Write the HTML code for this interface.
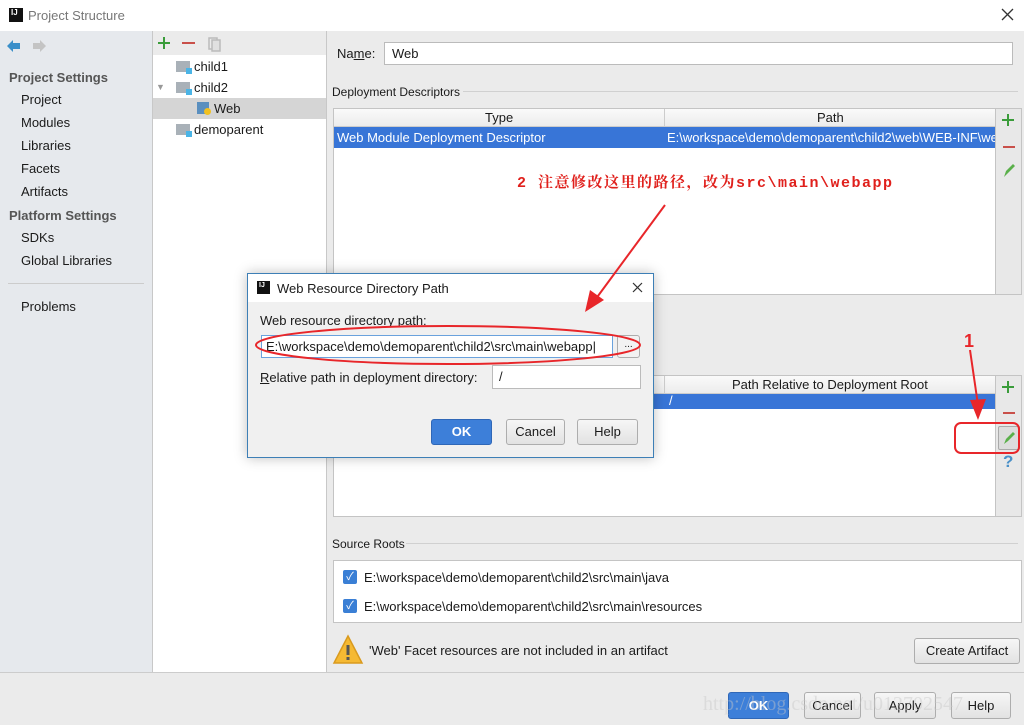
<!DOCTYPE html>
<html><head><meta charset="utf-8"><style>
*{box-sizing:border-box;margin:0;padding:0}
body{width:1024px;height:725px;position:relative;overflow:hidden;background:#ebebeb;font-family:"Liberation Sans","Noto Sans CJK SC",sans-serif;font-size:13px;color:#1a1a1a}
.a{position:absolute;white-space:nowrap}
.btn{position:absolute;border:1px solid #adadad;border-radius:3px;background:linear-gradient(#f6f6f6,#e2e2e2);text-align:center;font-size:13px}
.ok{background:#3d7fd9;border-color:#2f67b7;color:#fff;font-weight:bold}
.sel{background:#3875d7;color:#fff}
</style></head><body>
<div class="a" style="left:0;top:0;width:1024px;height:31px;background:#fff"></div>
<div class="a" style="left:9px;top:8px;width:14px;height:14px;background:#111;color:#fff;font-size:8px;font-weight:bold;line-height:10px;padding-left:2px">IJ</div>
<div class="a" style="left:28px;top:8px;color:#777;font-size:13px">Project Structure</div>
<svg class="a" style="left:1001px;top:8px" width="13" height="13"><path d="M1 1L12 12M12 1L1 12" stroke="#333" stroke-width="1.3"/></svg>
<div class="a" style="left:0;top:31px;width:152px;height:641px;background:#e6e9ed"></div>
<svg class="a" style="left:5px;top:38px" width="45" height="16"><path d="M2 8L8 2V5H15V11H8V14Z" fill="#3a8fc9"/><path d="M41 8L35 2V5H28V11H35V14Z" fill="#c4c4c4"/></svg>
<div class="a" style="left:9px;top:70px;font-weight:bold;color:#555">Project Settings</div>
<div class="a" style="left:21px;top:92px">Project</div>
<div class="a" style="left:21px;top:115px">Modules</div>
<div class="a" style="left:21px;top:138px">Libraries</div>
<div class="a" style="left:21px;top:161px">Facets</div>
<div class="a" style="left:21px;top:184px">Artifacts</div>
<div class="a" style="left:9px;top:208px;font-weight:bold;color:#555">Platform Settings</div>
<div class="a" style="left:21px;top:230px">SDKs</div>
<div class="a" style="left:21px;top:253px">Global Libraries</div>
<div class="a" style="left:8px;top:283px;width:136px;height:1px;background:#ccc"></div>
<div class="a" style="left:21px;top:299px">Problems</div>
<div class="a" style="left:152px;top:31px;width:175px;height:641px;background:#fff;border-left:1px solid #c8c8c8;border-right:1px solid #c8c8c8"></div>
<div class="a" style="left:153px;top:31px;width:173px;height:24px;background:#ebebeb"></div>
<svg class="a" style="left:157px;top:36px" width="70" height="16"><path d="M7 1V13M1 7H13" stroke="#3a9c3a" stroke-width="2"/><path d="M25 7H38" stroke="#c9504a" stroke-width="2"/><rect x="52" y="2" width="8" height="11" fill="none" stroke="#bbb" stroke-width="1.5"/><rect x="55" y="4" width="8" height="11" fill="#e0e0e0" stroke="#bbb" stroke-width="1.5"/></svg>
<div class="a" style="left:153px;top:98px;width:173px;height:21px;background:#d5d5d5"></div>
<div class="a" style="left:176px;top:61px;width:14px;height:11px;background:#a9b1b8"></div><div class="a" style="left:186px;top:68px;width:6px;height:6px;background:#4ab4e6"></div>
<div class="a" style="left:194px;top:59px">child1</div>
<div class="a" style="left:156px;top:82px;font-size:9px;color:#999">▼</div>
<div class="a" style="left:176px;top:82px;width:14px;height:11px;background:#a9b1b8"></div><div class="a" style="left:186px;top:89px;width:6px;height:6px;background:#4ab4e6"></div>
<div class="a" style="left:194px;top:80px">child2</div>
<div class="a" style="left:197px;top:102px;width:12px;height:12px;background:#5a8fbf"></div><div class="a" style="left:204px;top:108px;width:7px;height:7px;border-radius:50%;background:#f0c020"></div>
<div class="a" style="left:214px;top:101px">Web</div>
<div class="a" style="left:176px;top:124px;width:14px;height:11px;background:#a9b1b8"></div><div class="a" style="left:186px;top:131px;width:6px;height:6px;background:#4ab4e6"></div>
<div class="a" style="left:194px;top:122px">demoparent</div>
<div class="a" style="left:337px;top:46px">Na<u>m</u>e:</div>
<div class="a" style="left:384px;top:42px;width:629px;height:23px;background:#fff;border:1px solid #bbb;padding:3px 7px">Web</div>
<div class="a" style="left:332px;top:85px;font-size:12px">Deployment Descriptors</div>
<div class="a" style="left:463px;top:91px;width:555px;height:1px;background:#d0d0d0"></div>
<div class="a" style="left:333px;top:108px;width:663px;height:187px;background:#fff;border:1px solid #c4c4c4"></div>
<div class="a" style="left:334px;top:109px;width:661px;height:18px;background:linear-gradient(#fafafa,#ececec);border-bottom:1px solid #ccc"></div>
<div class="a" style="left:485px;top:110px">Type</div>
<div class="a" style="left:817px;top:110px">Path</div>
<div class="a" style="left:664px;top:109px;width:1px;height:39px;background:#ccc"></div>
<div class="a sel" style="left:334px;top:127px;width:661px;height:21px"></div>
<div class="a" style="left:337px;top:130px;color:#fff">Web Module Deployment Descriptor</div>
<div class="a" style="left:667px;top:130px;color:#fff;width:328px;overflow:hidden">E:\workspace\demo\demoparent\child2\web\WEB-INF\web.xml</div>
<div class="a" style="left:996px;top:108px;width:26px;height:187px;background:#e8e8e8;border:1px solid #c4c4c4;border-left:none"></div>
<svg class="a" style="left:1001px;top:113px" width="16" height="70"><path d="M7 1V13M1 7H13" stroke="#3a9c3a" stroke-width="2"/><path d="M2 34H14" stroke="#c9504a" stroke-width="2"/><path d="M3 64L5 58L12 51L14 53L7 60Z" fill="#5ab04a"/></svg>
<div class="a" style="left:517px;top:171px;color:#e0201c;font-family:'Liberation Mono','Noto Serif CJK SC',monospace;font-size:15px;font-weight:bold;letter-spacing:1.5px">2 注意修改这里的路径，改为src\main\webapp</div>
<div class="a" style="left:333px;top:375px;width:663px;height:142px;background:#fff;border:1px solid #c4c4c4"></div>
<div class="a" style="left:334px;top:376px;width:661px;height:18px;background:linear-gradient(#fafafa,#ececec);border-bottom:1px solid #ccc"></div>
<div class="a" style="left:664px;top:376px;width:1px;height:33px;background:#ccc"></div>
<div class="a" style="left:732px;top:377px">Path Relative to Deployment Root</div>
<div class="a sel" style="left:334px;top:394px;width:661px;height:15px"></div>
<div class="a" style="left:669px;top:393px;color:#fff">/</div>
<div class="a" style="left:996px;top:375px;width:26px;height:142px;background:#e8e8e8;border:1px solid #c4c4c4;border-left:none"></div>
<svg class="a" style="left:1001px;top:380px" width="16" height="40"><path d="M7 1V13M1 7H13" stroke="#3a9c3a" stroke-width="2"/><path d="M2 33H14" stroke="#c9504a" stroke-width="2"/></svg>
<div class="a" style="left:998px;top:426px;width:22px;height:24px;border:1px solid #aaa;border-radius:2px;background:#ddd"></div>
<svg class="a" style="left:1002px;top:430px" width="16" height="16"><path d="M2 14L4 9L11 2L13 4L6 11Z" fill="#5ab04a"/></svg>
<div class="a" style="left:1003px;top:452px;font-size:17px;color:#4a90c8;font-weight:bold">?</div>
<div class="a" style="left:332px;top:537px;font-size:12px">Source Roots</div>
<div class="a" style="left:406px;top:543px;width:612px;height:1px;background:#d0d0d0"></div>
<div class="a" style="left:333px;top:560px;width:689px;height:63px;background:#fff;border:1px solid #c4c4c4"></div>
<div class="a" style="left:343px;top:570px;width:14px;height:14px;background:#3a7fd5;border-radius:2px;color:#fff;font-size:11px;line-height:14px;text-align:center">✓</div>
<div class="a" style="left:364px;top:570px">E:\workspace\demo\demoparent\child2\src\main\java</div>
<div class="a" style="left:343px;top:599px;width:14px;height:14px;background:#3a7fd5;border-radius:2px;color:#fff;font-size:11px;line-height:14px;text-align:center">✓</div>
<div class="a" style="left:364px;top:599px">E:\workspace\demo\demoparent\child2\src\main\resources</div>
<svg class="a" style="left:332px;top:634px" width="32" height="32"><path d="M16 2 L30 29 L2 29 Z" fill="#f5b933" stroke="#d99a1e" stroke-width="1.5"/><rect x="14.5" y="11" width="3" height="10" fill="#555"/><rect x="14.5" y="23" width="3" height="3" fill="#555"/></svg>
<div class="a" style="left:369px;top:643px">'Web' Facet resources are not included in an artifact</div>
<div class="btn" style="left:914px;top:638px;width:106px;height:26px;line-height:24px">Create Artifact</div>
<div class="a" style="left:0;top:672px;width:1024px;height:1px;background:#ccc"></div>
<div class="btn ok" style="left:728px;top:692px;width:61px;height:27px;line-height:25px">OK</div>
<div class="btn" style="left:804px;top:692px;width:57px;height:27px;line-height:25px">Cancel</div>
<div class="btn" style="left:874px;top:692px;width:62px;height:27px;line-height:25px">Apply</div>
<div class="btn" style="left:951px;top:692px;width:60px;height:27px;line-height:25px">Help</div>
<div class="a" style="left:703px;top:693px;font-family:'Liberation Serif',serif;font-size:20px;color:rgba(200,200,200,0.45)">http://blog.csdn.net/u012702547</div>
<div class="a" style="left:247px;top:273px;width:407px;height:185px;background:#f0f0f0;border:1px solid #3d7fb6;box-shadow:0 0 12px rgba(0,0,0,0.25)"></div>
<div class="a" style="left:248px;top:274px;width:405px;height:28px;background:#fff"></div>
<div class="a" style="left:257px;top:281px;width:13px;height:13px;background:#111;color:#fff;font-size:7px;font-weight:bold;padding-left:2px;line-height:9px">IJ</div>
<div class="a" style="left:277px;top:281px">Web Resource Directory Path</div>
<svg class="a" style="left:632px;top:282px" width="11" height="11"><path d="M1 1L10 10M10 1L1 10" stroke="#333" stroke-width="1.2"/></svg>
<div class="a" style="left:260px;top:313px">Web resource directory path:</div>
<div class="a" style="left:261px;top:335px;width:352px;height:23px;background:#fff;border:1px solid #6aa2dd;padding:3px 4px">E:\workspace\demo\demoparent\child2\src\main\webapp|</div>
<div class="btn" style="left:617px;top:335px;width:23px;height:23px;font-size:10px;line-height:18px;background:#f2f2f2">...</div>
<div class="a" style="left:260px;top:370px"><u>R</u>elative path in deployment directory:</div>
<div class="a" style="left:492px;top:365px;width:149px;height:24px;background:#fff;border:1px solid #bbb;padding:3px 6px">/</div>
<div class="btn ok" style="left:431px;top:419px;width:61px;height:26px;line-height:24px">OK</div>
<div class="btn" style="left:506px;top:419px;width:59px;height:26px;line-height:24px">Cancel</div>
<div class="btn" style="left:577px;top:419px;width:61px;height:26px;line-height:24px">Help</div>
<svg class="a" style="left:0;top:0" width="1024" height="725">
<g stroke="#e8262a" stroke-width="2" fill="none">
<ellipse cx="448" cy="345" rx="192" ry="19"/>
<line x1="665" y1="205" x2="595" y2="300"/>
<line x1="970" y1="350" x2="978" y2="405"/>
<rect x="955" y="423" width="64" height="30" rx="6"/>
</g>
<path d="M585 312 L590 290 L604 300 Z" fill="#e8262a"/>
<path d="M978 420 L970 400 L986 399 Z" fill="#e8262a"/>
<text x="964" y="347" fill="#e8262a" font-family="Liberation Sans" font-weight="bold" font-size="18">1</text>
</svg>
</body></html>
